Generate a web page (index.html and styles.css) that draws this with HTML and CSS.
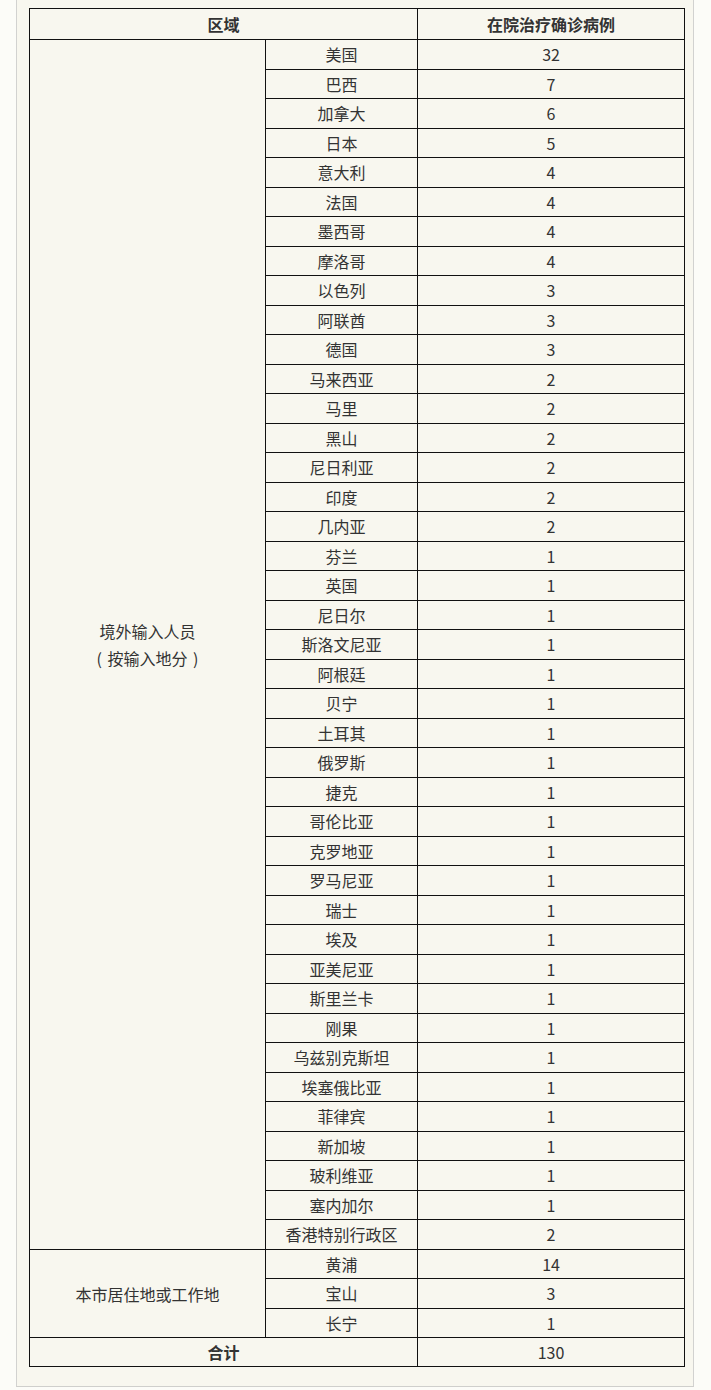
FILE: index.html
```html
<!DOCTYPE html>
<html lang="zh-CN">
<head>
<meta charset="utf-8">
<title>在院治疗确诊病例</title>
<link rel="stylesheet" href="styles.css">
</head>
<body>
<div class="panel">
<table class="data">
<colgroup><col class="c1"><col class="c2"><col class="c3"></colgroup>
<thead>
<tr class="head"><th colspan="2">区域</th><th>在院治疗确诊病例</th></tr>
</thead>
<tbody>
<tr><td rowspan="41" class="group">境外输入人员<br>( 按输入地分 )</td><td>美国</td><td>32</td></tr>
<tr><td>巴西</td><td>7</td></tr>
<tr><td>加拿大</td><td>6</td></tr>
<tr><td>日本</td><td>5</td></tr>
<tr><td>意大利</td><td>4</td></tr>
<tr><td>法国</td><td>4</td></tr>
<tr><td>墨西哥</td><td>4</td></tr>
<tr><td>摩洛哥</td><td>4</td></tr>
<tr><td>以色列</td><td>3</td></tr>
<tr><td>阿联酋</td><td>3</td></tr>
<tr><td>德国</td><td>3</td></tr>
<tr><td>马来西亚</td><td>2</td></tr>
<tr><td>马里</td><td>2</td></tr>
<tr><td>黑山</td><td>2</td></tr>
<tr><td>尼日利亚</td><td>2</td></tr>
<tr><td>印度</td><td>2</td></tr>
<tr><td>几内亚</td><td>2</td></tr>
<tr><td>芬兰</td><td>1</td></tr>
<tr><td>英国</td><td>1</td></tr>
<tr><td>尼日尔</td><td>1</td></tr>
<tr><td>斯洛文尼亚</td><td>1</td></tr>
<tr><td>阿根廷</td><td>1</td></tr>
<tr><td>贝宁</td><td>1</td></tr>
<tr><td>土耳其</td><td>1</td></tr>
<tr><td>俄罗斯</td><td>1</td></tr>
<tr><td>捷克</td><td>1</td></tr>
<tr><td>哥伦比亚</td><td>1</td></tr>
<tr><td>克罗地亚</td><td>1</td></tr>
<tr><td>罗马尼亚</td><td>1</td></tr>
<tr><td>瑞士</td><td>1</td></tr>
<tr><td>埃及</td><td>1</td></tr>
<tr><td>亚美尼亚</td><td>1</td></tr>
<tr><td>斯里兰卡</td><td>1</td></tr>
<tr><td>刚果</td><td>1</td></tr>
<tr><td>乌兹别克斯坦</td><td>1</td></tr>
<tr><td>埃塞俄比亚</td><td>1</td></tr>
<tr><td>菲律宾</td><td>1</td></tr>
<tr><td>新加坡</td><td>1</td></tr>
<tr><td>玻利维亚</td><td>1</td></tr>
<tr><td>塞内加尔</td><td>1</td></tr>
<tr><td>香港特别行政区</td><td>2</td></tr>
<tr><td rowspan="3" class="group">本市居住地或工作地</td><td>黄浦</td><td>14</td></tr>
<tr><td>宝山</td><td>3</td></tr>
<tr><td>长宁</td><td>1</td></tr>
<tr class="total"><th colspan="2">合计</th><td>130</td></tr>
</tbody>
</table>
</div>
</body>
</html>
```
FILE: styles.css
```css
html, body {
  margin: 0;
  padding: 0;
  background: #fcfcf8;
}
body {
  font-family: "Noto Sans CJK SC", "Microsoft YaHei", sans-serif;
  color: #333;
}
.panel {
  margin-left: 16px;
  padding: 8px 9px 19px 12px;
  box-sizing: border-box;
  width: 678px;
  background: #f8f7ef;
  border-left: 1px solid #d2d2d0;
  border-right: 1px solid #d2d2d0;
  border-bottom: 1px solid #cfcfcc;
  box-shadow: 0 2px 0 #e6e6e2;
}
.data {
  border-collapse: collapse;
  table-layout: fixed;
  width: 655px;
  font-size: 16px;
}
.c1 { width: 236px; }
.c2 { width: 152px; }
.c3 { width: 267px; }
.data th, .data td {
  border: 1px solid #111;
  padding: 0;
  text-align: center;
  vertical-align: middle;
  line-height: 20px;
  height: 29.5px;
  box-sizing: border-box;
}
.data th {
  font-weight: bold;
}
.head th {
  height: 31px;
}
.data td.group {
  line-height: 27px;
  padding-top: 2px;
  word-spacing: 2px;
}
.total th, .total td {
  height: 29px;
}
```
